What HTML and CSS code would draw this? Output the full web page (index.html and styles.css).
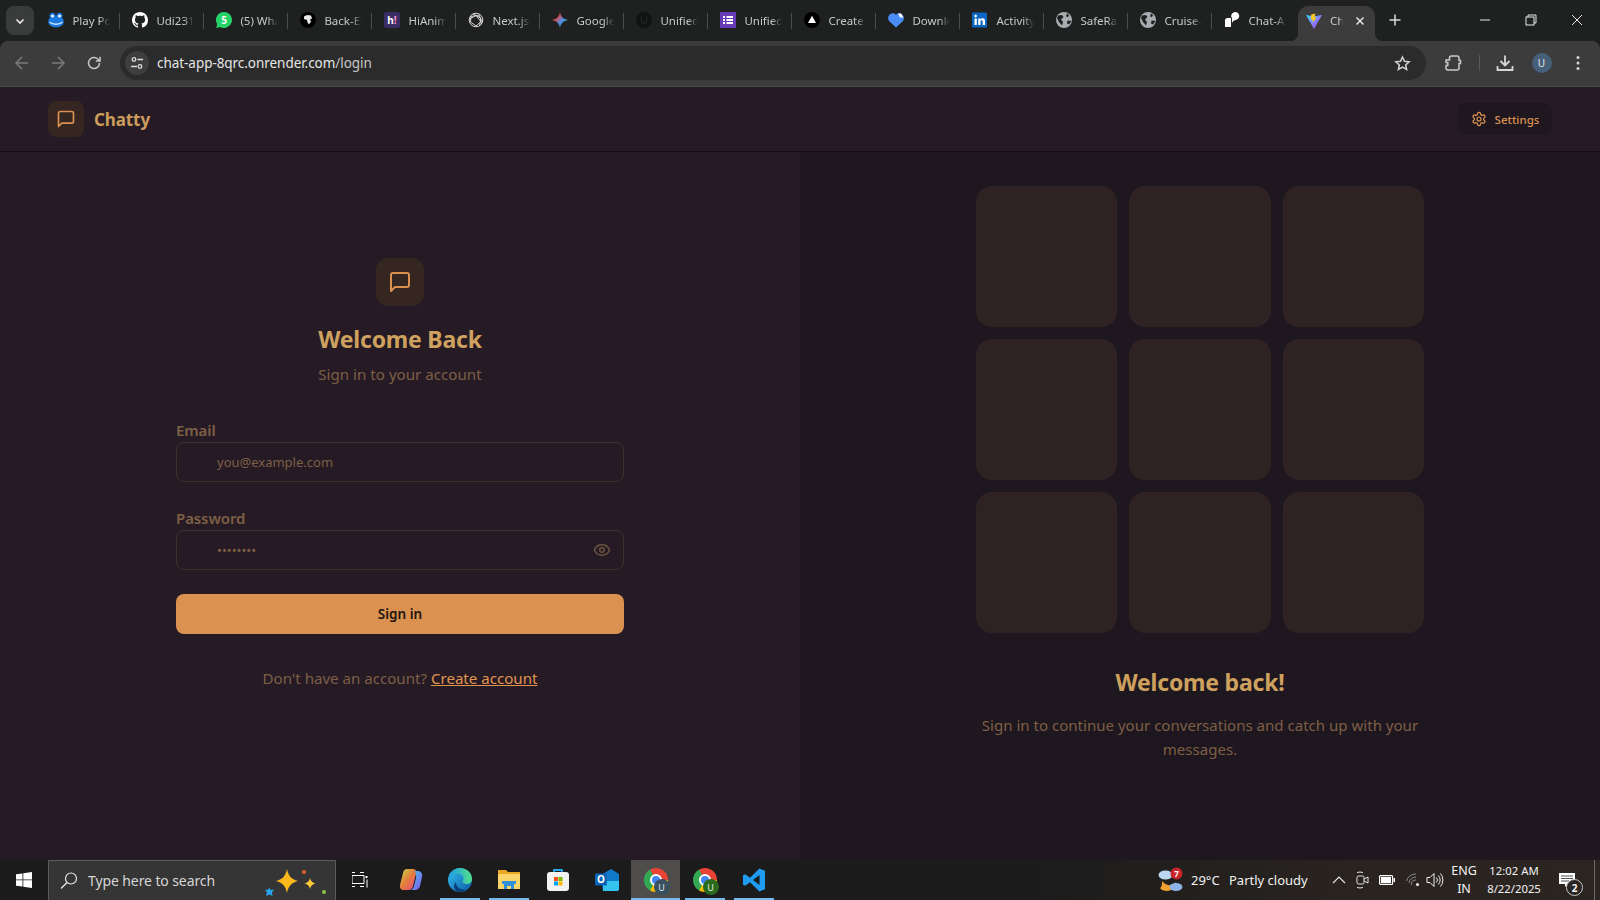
FILE: index.html
```html
<!DOCTYPE html>
<html lang="en">
<head>
<meta charset="utf-8">
<title>Chatty</title>
<link rel="stylesheet" href="styles.css">
</head>
<body>
<div class="screen">
  <div class="tabstrip">
    <button class="tablist-btn"><svg width="12" height="12" viewBox="0 0 12 12"><path d="M2.5 4.5 6 8l3.5-3.5" fill="none" stroke="#e6e6e6" stroke-width="1.7"/></svg></button>
    <div class="tab"><svg class="fav" viewBox="0 0 16 16"><ellipse cx="8" cy="9.5" rx="7.8" ry="6" fill="#1a78e0"/><circle cx="4.5" cy="3.8" r="3" fill="#1a78e0"/><circle cx="11.5" cy="3.8" r="3" fill="#1a78e0"/><circle cx="4.5" cy="4" r="1.5" fill="#fff"/><circle cx="11.5" cy="4" r="1.5" fill="#fff"/><path d="M1.5 9.5q6.500 4 13 0v1.500q-6.500 4-13 0z" fill="#bfe3ff"/></svg><span class="tab-title">Play Po</span></div>
    <div class="tab"><svg class="fav" viewBox="0 0 16 16"><path fill="#fff" d="M8 0C3.580 0 0 3.580 0 8c0 3.540 2.290 6.530 5.470 7.590.4.070.55-.17.55-.38 0-.19-.01-.82-.01-1.490-2.010.37-2.530-.49-2.690-.94-.09-.23-.48-.94-.82-1.130-.28-.15-.68-.52-.01-.53.63-.01 1.080.58 1.230.82.72 1.210 1.870.87 2.330.66.070-.52.28-.87.51-1.070-1.780-.2-3.640-.89-3.640-3.950 0-.87.31-1.590.82-2.150-.08-.2-.36-1.020.08-2.120 0 0 .67-.21 2.200.82.64-.18 1.320-.27 2-.27s1.360.09 2 .27c1.530-1.040 2.200-.82 2.200-.82.44 1.100.16 1.920.08 2.120.51.56.82 1.270.82 2.150 0 3.070-1.870 3.750-3.650 3.950.29.25.54.73.54 1.480 0 1.070-.01 1.930-.01 2.200 0 .21.15.46.55.38A8.010 8.010 0 0 0 16 8c0-4.420-3.580-8-8-8z"/></svg><span class="tab-title">Udi231</span></div>
    <div class="tab"><svg class="fav" viewBox="0 0 16 16"><path d="M8 0a8 8 0 0 0-6.800 12.200L.2 16l3.900-1A8 8 0 1 0 8 0z" fill="#25d366"/><text x="8" y="12" class="fav-num">5</text></svg><span class="tab-title">(5) Wha</span></div>
    <div class="tab"><svg class="fav" viewBox="0 0 16 16"><circle cx="8" cy="8" r="8" fill="#000"/><path d="M4 4.500 7 3l4 .5 1 3-2 1 1 2-2 3-1.500-2-.5-2.500L4 7z" fill="#e8e8e8"/></svg><span class="tab-title">Back-En</span></div>
    <div class="tab"><svg class="fav" viewBox="0 0 16 16"><rect width="16" height="16" rx="3" fill="#3a2d63"/><text x="8" y="12" class="fav-h">h<tspan fill="#ff9ad5">!</tspan></text></svg><span class="tab-title">HiAnim</span></div>
    <div class="tab"><svg class="fav" viewBox="0 0 16 16" fill="none" stroke="#d8d8d8" stroke-width="1"><circle cx="8" cy="8" r="6.800"/><path d="M3 4.500 11 3l2.500 6L8 14 2.500 10zM5 1.800l8 4.500-1.500 7.500M1.500 7 8 3.500 14 11"/></svg><span class="tab-title">Next.js</span></div>
    <div class="tab"><svg class="fav" viewBox="0 0 16 16"><defs><linearGradient id="gem" x1="0" y1="0" x2="1" y2="1"><stop offset="0" stop-color="#f0a030"/><stop offset=".3" stop-color="#e8483c"/><stop offset=".6" stop-color="#4a90f0"/><stop offset="1" stop-color="#34c06a"/></linearGradient></defs><path d="M8 0c.6 4.400 3 7.200 8 8-5 .8-7.400 3.600-8 8-.6-4.400-3-7.200-8-8 5-.8 7.400-3.600 8-8z" fill="url(#gem)"/></svg><span class="tab-title">Google</span></div>
    <div class="tab"><svg class="fav" viewBox="0 0 16 16"><circle cx="8" cy="8" r="8" fill="#111313"/><path d="M5.500 4v5a2.500 2.500 0 0 0 5 0V4" fill="none" stroke="#1f2222" stroke-width="1.300"/></svg><span class="tab-title">Unified</span></div>
    <div class="tab"><svg class="fav" viewBox="0 0 16 16"><rect width="16" height="16" fill="#673ab7"/><path d="M3 4h2v2H3zM6.500 4H13v2H6.500zM3 7h2v2H3zM6.500 7H13v2H6.500zM3 10h2v2H3zM6.500 10H13v2H6.500z" fill="#fff"/></svg><span class="tab-title">Unified</span></div>
    <div class="tab"><svg class="fav" viewBox="0 0 16 16"><circle cx="8" cy="8" r="8" fill="#000"/><path d="M8 3.800 12 11H4z" fill="#fff"/></svg><span class="tab-title">Create</span></div>
    <div class="tab"><svg class="fav" viewBox="0 0 16 16"><path d="M8 15.500 1 9C-.6 7 0 2.500 3.500 1.500 5.500 1 7.200 1.800 8 3c.8-1.200 2.500-2 4.500-1.500 3.500 1 4.100 5.500 2.500 7.500z" fill="#4a8df8"/><path d="M10 1.500h3l2.500 4h-3.500z" fill="#fff"/></svg><span class="tab-title">Downlo</span></div>
    <div class="tab"><svg class="fav" viewBox="0 0 16 16"><rect width="15" height="15" y=".5" rx="1" fill="#0a66c2"/><path d="M2.500 6.500h2.300V13H2.500zM3.650 2.800a1.300 1.300 0 1 1 0 2.600 1.300 1.300 0 0 1 0-2.600zM6.200 6.500h2.200v.9c.4-.7 1.100-1.100 2.100-1.100 1.900 0 2.500 1.200 2.500 3V13h-2.300V9.800c0-.8-.2-1.500-1-1.500s-1.200.6-1.200 1.500V13H6.200z" fill="#fff"/></svg><span class="tab-title">Activity</span></div>
    <div class="tab"><svg class="fav" viewBox="0 0 16 16"><circle cx="8" cy="8" r="8" fill="#a8acb0"/><path d="M2 3.500 6 3l1.500 2L5 7.500l2 2.500-1 3.500-3-3.500L1 6zM11 1.500l2 1.500L12 5l-2-.5zM15.500 9 13 12.500l-2-1 .5-3z" fill="#1f2121"/></svg><span class="tab-title">SafeRa</span></div>
    <div class="tab"><svg class="fav" viewBox="0 0 16 16"><circle cx="8" cy="8" r="8" fill="#a8acb0"/><path d="M2 3.500 6 3l1.500 2L5 7.500l2 2.500-1 3.500-3-3.500L1 6zM11 1.500l2 1.500L12 5l-2-.5zM15.500 9 13 12.500l-2-1 .5-3z" fill="#1f2121"/></svg><span class="tab-title">Cruise-</span></div>
    <div class="tab tab-last"><svg class="fav" viewBox="0 0 16 16"><path d="M1 15V8.500A2.500 2.500 0 0 1 3.500 6H7V15z" fill="#fff"/><path d="M7.500 5.500A4 4 0 1 1 11.500 8 4 4 0 0 0 8 11V6z" fill="#fff"/></svg><span class="tab-title">Chat-A</span></div>
    <div class="tab-active"><svg class="fav" viewBox="0 0 16 16"><defs><linearGradient id="vt1" x1="0" y1="0" x2="1" y2="1"><stop offset="0" stop-color="#41d1ff"/><stop offset="1" stop-color="#bd34fe"/></linearGradient></defs><path d="M0 2 8 3.300 16 2 8 16z" fill="url(#vt1)"/><path d="M9.500.5 5.200 1.500 5 7l2-.3-.4 3.300 4-5.800-2.200.4z" fill="#ffc91f"/></svg><span class="tab-title tab-title-short">Ch</span><svg class="tab-close" width="10" height="10" viewBox="0 0 10 10"><path d="M1.500 1.500l7 7m0-7-7 7" stroke="#e3e3e3" stroke-width="1.500"/></svg></div>
    <button class="newtab"><svg width="14" height="14" viewBox="0 0 14 14"><path d="M7 1.500v11M1.500 7h11" stroke="#dcdcdc" stroke-width="1.500"/></svg></button>
    <div class="win-controls">
      <div class="win-btn"><svg width="12" height="12" viewBox="0 0 12 12"><path d="M1 6h10" stroke="#e8e8e8"/></svg></div>
      <div class="win-btn"><svg width="12" height="12" viewBox="0 0 12 12" fill="none" stroke="#e8e8e8"><rect x="1" y="3" width="8" height="8"/><path d="M3 3V1h8v8H9"/></svg></div>
      <div class="win-btn"><svg width="12" height="12" viewBox="0 0 12 12"><path d="M1 1l10 10M11 1 1 11" stroke="#e8e8e8"/></svg></div>
    </div>
  </div>

  <div class="toolbar">
    <div class="nav-btn"><svg width="16" height="16" viewBox="0 0 16 16" fill="none" stroke="#7b7b7b" stroke-width="1.500"><path d="M14 8H2.500M8 2 2 8l6 6"/></svg></div>
    <div class="nav-btn"><svg width="16" height="16" viewBox="0 0 16 16" fill="none" stroke="#7b7b7b" stroke-width="1.500"><path d="M2 8h11.500M8 2l6 6-6 6"/></svg></div>
    <div class="nav-btn"><svg width="16" height="16" viewBox="0 0 16 16" fill="none" stroke="#c8c8c8" stroke-width="1.500"><path d="M13.500 8A5.500 5.500 0 1 1 11.800 4L14 6"/><path d="M14 1.800V6H9.800" /></svg></div>
    <div class="omnibox">
      <div class="site-icon"><svg width="14" height="14" viewBox="0 0 14 14" fill="none" stroke="#dcdcdc" stroke-width="1.300"><circle cx="4" cy="3.500" r="1.800"/><path d="M7.500 3.500H13M1 10.500h6"/><circle cx="10" cy="10.500" r="1.800"/></svg></div>
      <span class="url">chat-app-8qrc.onrender.com<span class="url-path">/login</span></span>
      <svg class="star" width="17" height="17" viewBox="0 0 24 24" fill="none" stroke="#d0d0d0" stroke-width="2.200"><path d="m12 2.800 2.800 6 6.500.8-4.800 4.400 1.300 6.500-5.800-3.300-5.800 3.300 1.300-6.500L2.700 9.600l6.500-.8z"/></svg>
    </div>
    <div class="tool-btn tool-ext"><svg width="18" height="18" viewBox="0 0 18 18" fill="none" stroke="#c9c9c9" stroke-width="1.500"><path d="M2 6h3.500V4a2 2 0 0 1 2-2H13a2 2 0 0 1 2 2v2.500h1.500v3H15V14a2 2 0 0 1-2 2H4a2 2 0 0 1-2-2v-2.500h1.800v-3H2z"/></svg></div>
    <div class="tool-divider"></div>
    <div class="tool-btn tool-dl"><svg width="18" height="18" viewBox="0 0 18 18" fill="none" stroke="#d6d6d6" stroke-width="1.800"><path d="M9 1.500v9.500M4.500 7 9 11.500 13.500 7M1.500 12v4h15v-4"/></svg></div>
    <div class="tool-btn"><span class="avatar">U</span></div>
    <div class="tool-btn tool-menu"><svg width="16" height="16" viewBox="0 0 16 16" fill="#d6d6d6"><circle cx="8" cy="2.500" r="1.500"/><circle cx="8" cy="8" r="1.500"/><circle cx="8" cy="13.500" r="1.500"/></svg></div>
  </div>

  <div class="page">
    <header class="app-header">
      <div class="brand">
        <div class="brand-icon"><svg class="lucide lucide-20" viewBox="0 0 24 24"><path d="M21 15a2 2 0 0 1-2 2H7l-4 4V5a2 2 0 0 1 2-2h14a2 2 0 0 1 2 2z"/></svg></div>
        <span class="brand-name">Chatty</span>
      </div>
      <a class="settings-btn" href="#"><svg class="lucide lucide-16" viewBox="0 0 24 24"><path d="M12.220 2h-.44a2 2 0 0 0-2 2v.18a2 2 0 0 1-1 1.730l-.43.25a2 2 0 0 1-2 0l-.15-.08a2 2 0 0 0-2.730.73l-.22.38a2 2 0 0 0 .73 2.730l.15.1a2 2 0 0 1 1 1.720v.51a2 2 0 0 1-1 1.740l-.15.09a2 2 0 0 0-.73 2.730l.22.38a2 2 0 0 0 2.730.73l.15-.08a2 2 0 0 1 2 0l.43.25a2 2 0 0 1 1 1.730V20a2 2 0 0 0 2 2h.44a2 2 0 0 0 2-2v-.18a2 2 0 0 1 1-1.730l.43-.25a2 2 0 0 1 2 0l.15.08a2 2 0 0 0 2.730-.73l.22-.39a2 2 0 0 0-.73-2.730l-.15-.08a2 2 0 0 1-1-1.740v-.5a2 2 0 0 1 1-1.740l.15-.09a2 2 0 0 0 .73-2.730l-.22-.38a2 2 0 0 0-2.730-.73l-.15.08a2 2 0 0 1-2 0l-.43-.25a2 2 0 0 1-1-1.730V4a2 2 0 0 0-2-2z"/><circle cx="12" cy="12" r="3"/></svg><span>Settings</span></a>
    </header>

    <section class="panel panel-left">
      <div class="login">
        <div class="login-head">
          <div class="logo-box"><svg class="lucide lucide-24" viewBox="0 0 24 24"><path d="M21 15a2 2 0 0 1-2 2H7l-4 4V5a2 2 0 0 1 2-2h14a2 2 0 0 1 2 2z"/></svg></div>
          <h1 class="title">Welcome Back</h1>
          <p class="subtitle">Sign in to your account</p>
        </div>
        <form class="form">
          <div class="field">
            <label class="label" for="email">Email</label>
            <input class="input" id="email" type="email" placeholder="you@example.com">
          </div>
          <div class="field field-pw">
            <label class="label" for="password">Password</label>
            <div class="input-wrap">
              <input class="input" id="password" type="password" value="abcdefgh">
              <svg class="lucide eye" viewBox="0 0 24 24"><path d="M2.060 12.350a1 1 0 0 1 0-.7 10.750 10.750 0 0 1 19.880 0 1 1 0 0 1 0 .7 10.750 10.750 0 0 1-19.880 0"/><circle cx="12" cy="12" r="3"/></svg>
            </div>
          </div>
          <button class="signin" type="button">Sign in</button>
        </form>
        <p class="foot">Don't have an account? <a href="#" class="foot-link">Create account</a></p>
      </div>
    </section>

    <section class="panel panel-right">
      <div class="promo">
        <div class="grid">
          <div class="cell"></div><div class="cell"></div><div class="cell"></div>
          <div class="cell"></div><div class="cell"></div><div class="cell"></div>
          <div class="cell"></div><div class="cell"></div><div class="cell"></div>
        </div>
        <h2 class="promo-title">Welcome back!</h2>
        <p class="promo-text">Sign in to continue your conversations and catch up with your messages.</p>
      </div>
    </section>
  </div>

  <footer class="taskbar">
    <div class="start"><svg width="16" height="16" viewBox="0 0 16 16" fill="#fff"><path d="M0 2.300 6.500 1.400v6.100H0zM7.300 1.300 16 0v7.500H7.300zM0 8.300h6.500v6.300L0 13.700zM7.300 8.300H16V16l-8.700-1.200z"/></svg></div>
    <div class="search">
      <svg width="18" height="18" viewBox="0 0 18 18" fill="none" stroke="#e8e8e8" stroke-width="1.200"><circle cx="11" cy="6.500" r="5.500"/><path d="M7 10.500 1 16.500"/></svg>
      <span class="search-text">Type here to search</span>
      <svg class="sparkles" width="62" height="36" viewBox="0 0 62 36"><path d="M23 6c1.500 7 4 10 11 12-7 2-9.500 5-11 12-1.500-7-4-10-11-12 7-2 9.500-5 11-12z" fill="#fbb81c"/><path d="M46 15c.7 3 2 4.500 5.500 5.500-3.500 1-4.800 2.500-5.500 5.500-.7-3-2-4.500-5.500-5.500 3.500-1 4.800-2.500 5.500-5.500z" fill="#fcc93a"/><circle cx="40" cy="9" r="2" fill="#e4622a"/><circle cx="60" cy="29" r="2" fill="#8cc63f"/><path d="M5 24l1.500 3 3.500-.5-2 3 .5 3.500-3-1.500-3.500 1.500 1-3.500-2-2.500 3.500-.5z" fill="#2aa4ec"/></svg>
    </div>
    <div class="task-view"><svg width="16" height="16" viewBox="0 0 16 16" fill="none" stroke="#fff"><path d="M0 .5h3M8 .5h4M0 3.500h12v8H0zM0 14.500h3M8 14.500h4"/><rect x="13.500" y="4" width="2" height="2" fill="#fff" stroke="none"/><path d="M15 7.500v8"/></svg></div>
    <div class="task-slot task-first"><svg width="24" height="24" viewBox="0 0 24 24"><defs><linearGradient id="cp1" x1="0" y1="0" x2="1" y2="1"><stop offset="0" stop-color="#3fc1e8"/><stop offset="1" stop-color="#8a5cf0"/></linearGradient><linearGradient id="cp2" x1="0" y1="0" x2="1" y2="1"><stop offset="0" stop-color="#c4d84a"/><stop offset=".5" stop-color="#e67a3c"/><stop offset="1" stop-color="#e8488a"/></linearGradient></defs><path d="M8 1h6c2 0 3 1 3.500 3L14 18c-.5 2-2 4-4.500 4H5c-3 0-4.500-2-4-5L4 5c.5-2.500 2-4 4-4z" fill="url(#cp2)"/><path d="M15 3h4c3 0 5 3 4 6l-2 9c-.5 2.500-3 4-5 4h-5c2 0 3.500-2 4-4l2-8c.5-2 0-6-2-7z" fill="url(#cp1)"/></svg></div>
    <div class="task-slot task-open"><svg width="24" height="24" viewBox="0 0 24 24"><defs><linearGradient id="ed1" x1="0" y1="0" x2="1" y2="1"><stop offset="0" stop-color="#35c1f1"/><stop offset="1" stop-color="#0c59a4"/></linearGradient><linearGradient id="ed2" x1="0" y1="0" x2="1" y2="0"><stop offset="0" stop-color="#1b9de2"/><stop offset="1" stop-color="#54e08a"/></linearGradient></defs><circle cx="12" cy="12" r="12" fill="url(#ed1)"/><path d="M1 9C3 3 8 0 12 0c7 0 12 5 12 11 0 3-2.500 5-5.500 5-2 0-4-1-4-2.500 0-.6 1-1 1-3C15.500 7 12 5 9 5.500 5 6 2 8 1 9z" fill="url(#ed2)"/><path d="M8 14c0 5 5 9 10 7-1.500 2-4 3-6 3-4 0-6-3-6-6 0-1 1-3 2-4z" fill="#0a3d7a"/></svg></div>
    <div class="task-slot task-open"><svg width="24" height="22" viewBox="0 0 24 22"><path d="M1 1h8l2 2h12v17H1z" fill="#e9a820"/><rect x="1" y="5" width="22" height="15" fill="#fcd56a"/><path d="M7 20v-6h10v6h-3v-3h-4v3z" fill="#2f8fd8"/><rect x="5" y="12" width="14" height="3" fill="#2f8fd8"/></svg></div>
    <div class="task-slot"><svg width="24" height="24" viewBox="0 0 24 24"><path d="M8 5V2h8v3" fill="none" stroke="#28a8ea" stroke-width="1.800"/><rect x="1" y="4" width="22" height="19" rx="3" fill="#f2f2f2"/><rect x="8" y="9" width="4" height="4" fill="#f25022"/><rect x="12.500" y="9" width="4" height="4" fill="#7fba00"/><rect x="8" y="13.500" width="4" height="4" fill="#00a4ef"/><rect x="12.500" y="13.500" width="4" height="4" fill="#ffb900"/></svg></div>
    <div class="task-slot"><svg width="24" height="24" viewBox="0 0 24 24"><path d="M6 7 16 1l8 5v15a2 2 0 0 1-2 2H8z" fill="#0f7bc8"/><path d="M8 13h16v8a2 2 0 0 1-2 2H8z" fill="#35c3f0"/><rect y="5.500" width="12" height="12" rx="1" fill="#0a63b5"/><text x="6" y="15" class="out-o">O</text></svg></div>
    <div class="task-slot task-active"><div class="chrome"><span class="chrome-ring"></span><span class="chrome-badge chrome-badge-grey">U</span></div></div>
    <div class="task-slot task-open"><div class="chrome"><span class="chrome-ring"></span><span class="chrome-badge chrome-badge-green">U</span></div></div>
    <div class="task-slot task-open"><svg width="24" height="24" viewBox="0 0 24 24"><path fill-rule="evenodd" d="M17.500 0.500 8 9.800 3.200 6.200 1 7.300v9.400l2.200 1.100L8 14.200l9.500 9.300 5.500-2.300V2.800zM17.500 7 11 12l6.500 5z" fill="#1f9cf0"/></svg></div>

    <div class="weather">
      <svg width="26" height="26" viewBox="0 0 26 26"><path d="M4 14c5 6 12 5 14 1 0 5-4 9-9 9-3 0-6-1-7-3 2-1 2-4 2-7z" fill="#f0a030"/><ellipse cx="7.500" cy="8" rx="7" ry="4.500" fill="#bcd7f2"/><ellipse cx="18" cy="20" rx="6.500" ry="4" fill="#8cb4e8"/><circle cx="18.500" cy="6.500" r="6" fill="#c8242b"/><text x="18.500" y="10" class="wx-num">7</text></svg>
      <span class="wx-temp">29°C</span><span class="wx-text">Partly cloudy</span>
    </div>
    <div class="tray tray-chev"><svg width="14" height="14" viewBox="0 0 14 14" fill="none" stroke="#e8e8e8" stroke-width="1.100"><path d="M1 10l6-6 6 6"/></svg></div>
    <div class="tray tray-meet"><svg width="14" height="18" viewBox="0 0 14 18" fill="none" stroke="#e4e4e4"><path d="M1 1.500q3-1 6 0M1 16.500q3 1 6 0"/><rect x="1" y="5" width="7" height="8" rx="1.500"/><path d="M8 8l4-2v6l-4-2"/></svg></div>
    <div class="tray tray-batt"><svg width="16" height="10" viewBox="0 0 16 10"><rect x=".6" y=".6" width="13" height="8.800" rx="1" fill="none" stroke="#fff" stroke-width="1.200"/><rect x="2" y="2" width="10" height="6" fill="#fff"/><rect x="14.500" y="3" width="1.500" height="4" fill="#fff"/></svg></div>
    <div class="tray"><svg width="14" height="14" viewBox="0 0 14 14" fill="none" stroke="#8a8a8a"><path d="M.5 8A10 10 0 0 1 10 1M3 10a7 7 0 0 1 7-6M5.500 12a4 4 0 0 1 4.500-5"/><circle cx="11.500" cy="11.500" r="1.500" fill="#f4f4f4" stroke="none"/></svg></div>
    <div class="tray"><svg width="18" height="16" viewBox="0 0 18 16" fill="none" stroke="#eee"><path d="M1 5.500h3L8 1.500v13l-4-4H1zM10.500 5.500a4 4 0 0 1 0 5M12.500 3.500a7 7 0 0 1 0 9M14.500 1.500a10 10 0 0 1 0 13"/></svg></div>
    <div class="lang"><span>ENG</span><span>IN</span></div>
    <div class="clock"><span>12:02 AM</span><span>8/22/2025</span></div>
    <div class="notif"><svg width="18" height="15" viewBox="0 0 18 15"><path d="M1 0h16v11h-7l-3 3v-3H1z" fill="#fff"/><path d="M3 3h12M3 5.500h12M3 8h8" stroke="#222" stroke-width=".8"/></svg><span class="notif-badge">2</span></div>
    <div class="show-desktop"></div>
  </footer>
</div>
</body>
</html>
```

FILE: styles.css
```css
* { box-sizing: border-box; }
html, body { margin: 0; padding: 0; }
body { font-family: "Noto Sans", "Open Sans", sans-serif; background: #1c1c1c; overflow: hidden; }
svg { display: block; flex: none; }

.screen { width: 1600px; height: 900px; display: flex; flex-direction: column; overflow: hidden; }

/* Browser tab strip */
.tabstrip { height: 41px; flex: none; display: flex; align-items: flex-start; background: #1f2121; padding: 6px 0 0 6px; }
.tablist-btn { width: 28px; height: 29px; margin: 0 2.400px 0 0; padding: 0; border: 0; border-radius: 8px; background: #3a3b3b; display: flex; align-items: center; justify-content: center; }
.tab { position: relative; width: 84px; height: 28px; display: flex; align-items: center; padding-left: 12px; gap: 8px; }
.tab::after { content: ""; position: absolute; right: 0; top: 7px; width: 1px; height: 16px; background: #4c4e4e; }
.tab-last { width: 85.500px; }
.tab-last::after { display: none; }
.fav { width: 16px; height: 16px; }
.tab-title { width: 38px; overflow: hidden; white-space: nowrap; font-size: 11.500px; color: #c7c8c8; -webkit-mask-image: linear-gradient(90deg, #000 72%, transparent 100%); mask-image: linear-gradient(90deg, #000 72%, transparent 100%); }
.tab-title-short { width: 13px; margin-right: 4px; }
.tab-active { position: relative; width: 77px; height: 35px; margin-top: 0; padding: 0 0 6px 8px; background: #3c3c3c; border-radius: 10px 10px 0 0; display: flex; align-items: center; gap: 8px; }
.tab-active::before, .tab-active::after { content: ""; position: absolute; bottom: 0; width: 8px; height: 8px; }
.tab-active::before { left: -8px; background: radial-gradient(circle at 0 0, transparent 8px, #3c3c3c 8.500px); }
.tab-active::after { right: -8px; background: radial-gradient(circle at 100% 0, transparent 8px, #3c3c3c 8.500px); }
.tab-close { margin-left: 0; }
.fav-num { font: 700 10px "Noto Sans", sans-serif; fill: #fff; text-anchor: middle; }
.fav-h { font: 700 10px "Noto Sans", sans-serif; fill: #fff; text-anchor: middle; }
.newtab { width: 28px; height: 28px; margin-left: 6px; padding: 0; border: 0; background: transparent; display: flex; align-items: center; justify-content: center; }
.win-controls { margin-left: auto; margin-top: -6px; display: flex; }
.win-btn { width: 46px; height: 40px; display: flex; align-items: center; justify-content: center; }

/* Browser toolbar */
.toolbar { height: 46px; flex: none; display: flex; align-items: center; padding: 0 0 1px 6px; background: #3c3c3c; border-bottom: 1px solid #4b4b4b; border-radius: 8px 8px 0 0; }
.nav-btn { width: 32px; height: 32px; margin-right: 4px; flex: none; display: flex; align-items: center; justify-content: center; }
.omnibox { width: 1306px; height: 34px; flex: none; margin-left: 6px; border-radius: 17px; background: #2b2b2b; display: flex; align-items: center; padding: 0 15px 0 5px; }
.site-icon { width: 24px; height: 24px; border-radius: 50%; background: #3e3e3e; display: flex; align-items: center; justify-content: center; margin-right: 8px; }
.url { font-size: 13.500px; color: #e6e6e6; letter-spacing: -.05px; }
.url-path { color: #c4c7c7; }
.star { margin-left: auto; }
.tool-btn { width: 32px; height: 32px; flex: none; display: flex; align-items: center; justify-content: center; margin-left: 5px; }
.tool-ext { margin-left: 11px; }
.tool-dl { margin-left: 9px; }
.tool-menu { margin-left: 4.500px; }
.tool-divider { width: 1px; height: 16px; flex: none; margin-left: 9.500px; background: #5a5a5a; }
.avatar { width: 20px; height: 20px; border-radius: 50%; background: #47607a; color: #e6e6e6; font-size: 10px; display: flex; align-items: center; justify-content: center; }

/* Page */
.page { position: relative; flex: 1; display: grid; grid-template-columns: 1fr 1fr; min-height: 0; }
.app-header { position: absolute; top: 0; left: 0; right: 0; height: 65px; padding: 0 48px; display: flex; align-items: center; justify-content: space-between; background: #261b25; border-bottom: 1px solid #160f14; }
.brand { display: flex; align-items: center; gap: 10px; }
.brand-icon { width: 36px; height: 36px; border-radius: 8px; background: #352622; display: flex; align-items: center; justify-content: center; }
.brand-name { font-size: 17px; font-weight: 700; color: #cb9d5c; letter-spacing: -.1px; }
.lucide { fill: none; stroke: #db9250; stroke-width: 2; stroke-linecap: round; stroke-linejoin: round; }
.lucide-20 { width: 20px; height: 20px; }
.lucide-24 { width: 24px; height: 24px; }
.lucide-16 { width: 16px; height: 16px; stroke-width: 1.800; }
.settings-btn { height: 32px; width: 94px; display: flex; align-items: center; justify-content: center; gap: 8px; border-radius: 8px; background: #1f171f; color: #db9250; font-size: 11.500px; font-weight: 500; text-decoration: none; }

.panel { display: flex; align-items: center; justify-content: center; }
.panel-left { background: #261b25; }
.panel-right { background: #1f171f; }

.login { width: 448px; display: flex; flex-direction: column; }
.login-head { display: flex; flex-direction: column; align-items: center; margin-bottom: 32px; }
.logo-box { width: 48px; height: 48px; border-radius: 12px; background: #352622; display: flex; align-items: center; justify-content: center; margin-bottom: 16px; }
.title { margin: 0 0 8px; font-size: 23px; line-height: 32px; padding-top: 1px; height: 32px; font-weight: 700; color: #cfa15e; letter-spacing: -.2px; }
.subtitle { margin: 0; font-size: 15.150px; line-height: 24px; color: #7d5f45; }
.form { display: flex; flex-direction: column; gap: 24px; }
.field { display: flex; flex-direction: column; }
.label { font-size: 15px; line-height: 24px; font-weight: 600; color: #7d5f45; letter-spacing: -.1px; }
.input-wrap { position: relative; }
.input { width: 100%; height: 40px; padding: 0 40px; border: 1px solid #40302d; border-radius: 8px; background: transparent; outline: none; color: #7d5f45; font-family: inherit; font-size: 13px; }
.input::placeholder { color: #7d5f45; opacity: 1; }
.eye { position: absolute; right: 13px; top: 11px; width: 18px; height: 18px; stroke: #6d5340; }
.signin { height: 40px; border: 0; border-radius: 8px; background: #db9250; color: #1c1410; font-family: inherit; font-size: 13.500px; font-weight: 600; }
.foot { margin: 32px 0 0; text-align: center; font-size: 15.100px; line-height: 24px; color: #7d5f45; }
.foot-link { color: #e09550; }

.promo { width: 448px; display: flex; flex-direction: column; align-items: center; }
.grid { width: 100%; display: grid; grid-template-columns: repeat(3, 1fr); gap: 12px; margin-bottom: 32px; }
.cell { aspect-ratio: 1; border-radius: 16px; background: #2e2322; }
.promo-title { margin: 0 0 16px; font-size: 23px; line-height: 32px; padding-top: 1px; height: 32px; font-weight: 700; color: #cfa15e; letter-spacing: -.2px; }
.promo-text { margin: 0; text-align: center; font-size: 15.050px; line-height: 24px; color: #7d5f45; }

/* Windows taskbar */
.taskbar { height: 40px; flex: none; display: flex; align-items: stretch; background: linear-gradient(90deg, #1b1b1b 0, #1c1c1c 65%, #2a2420 85%, #2b2522 100%); color: #f2f2f2; }
.start { width: 48px; display: flex; align-items: center; justify-content: center; }
.search { width: 288px; display: flex; align-items: center; padding-left: 11px; background: #353535; border: 1px solid #5c5c5c; border-bottom: 0; }
.search-text { margin-left: 10px; font-size: 14px; color: #d6d6d6; letter-spacing: -.1px; }
.sparkles { margin-left: auto; margin-right: 9px; }
.task-view { width: 48px; display: flex; align-items: center; justify-content: center; }
.task-slot { position: relative; width: 49px; display: flex; align-items: center; justify-content: center; }
.task-first { margin-left: 2px; }
.task-open::after, .task-active::after { content: ""; position: absolute; bottom: 0; left: 4.500px; right: 4.500px; height: 2px; background: #76b9ed; }
.task-active { background: #4f4c4c; }
.task-active::after { left: 0; right: 0; }
.chrome { position: relative; width: 24px; height: 24px; border-radius: 50%; background: conic-gradient(#ea4335 0 90deg, #fbbc04 90deg 210deg, #34a853 210deg 330deg, #ea4335 330deg 360deg); display: flex; align-items: center; justify-content: center; }
.chrome-ring { width: 12px; height: 12px; border-radius: 50%; background: #4285f4; border: 2px solid #fff; }
.chrome-badge { position: absolute; right: -2px; bottom: -3px; width: 16px; height: 16px; border-radius: 50%; font-size: 9px; display: flex; align-items: center; justify-content: center; }
.chrome-badge-grey { background: #38505f; color: #dfe5e8; }
.chrome-badge-green { background: #2a6a1f; color: #e4f0df; }
.out-o { font: 700 10px "Noto Sans", sans-serif; fill: #fff; text-anchor: middle; }

.weather { margin-left: auto; display: flex; align-items: center; font-size: 13px; }
.wx-temp { margin-left: 7px; width: 38px; }
.wx-text { width: 80px; white-space: nowrap; font-size: 13px; }
.wx-num { font: 700 8px "Noto Sans", sans-serif; fill: #fff; text-anchor: middle; }
.tray { width: 22px; display: flex; align-items: center; justify-content: center; }
.tray-chev { margin-left: 19px; margin-right: 2px; }
.tray-meet { margin-right: 2px; }
.tray-batt { margin-right: 4px; }
.lang { width: 30px; margin-left: 3px; margin-right: 9px; display: flex; flex-direction: column; align-items: center; justify-content: center; font-size: 12.500px; line-height: 18px; }
.clock { width: 52px; white-space: nowrap; display: flex; flex-direction: column; align-items: center; justify-content: center; font-size: 11.300px; line-height: 18px; }
.notif { position: relative; width: 54px; display: flex; align-items: center; justify-content: center; }
.notif-badge { position: absolute; right: 11px; bottom: 4px; width: 17px; height: 17px; border: 1px solid #c8c8c8; border-radius: 50%; background: #2a2522; font-size: 10px; font-weight: 700; display: flex; align-items: center; justify-content: center; }
.show-desktop { width: 6px; border-left: 1px solid #6a6a6a; }
```
